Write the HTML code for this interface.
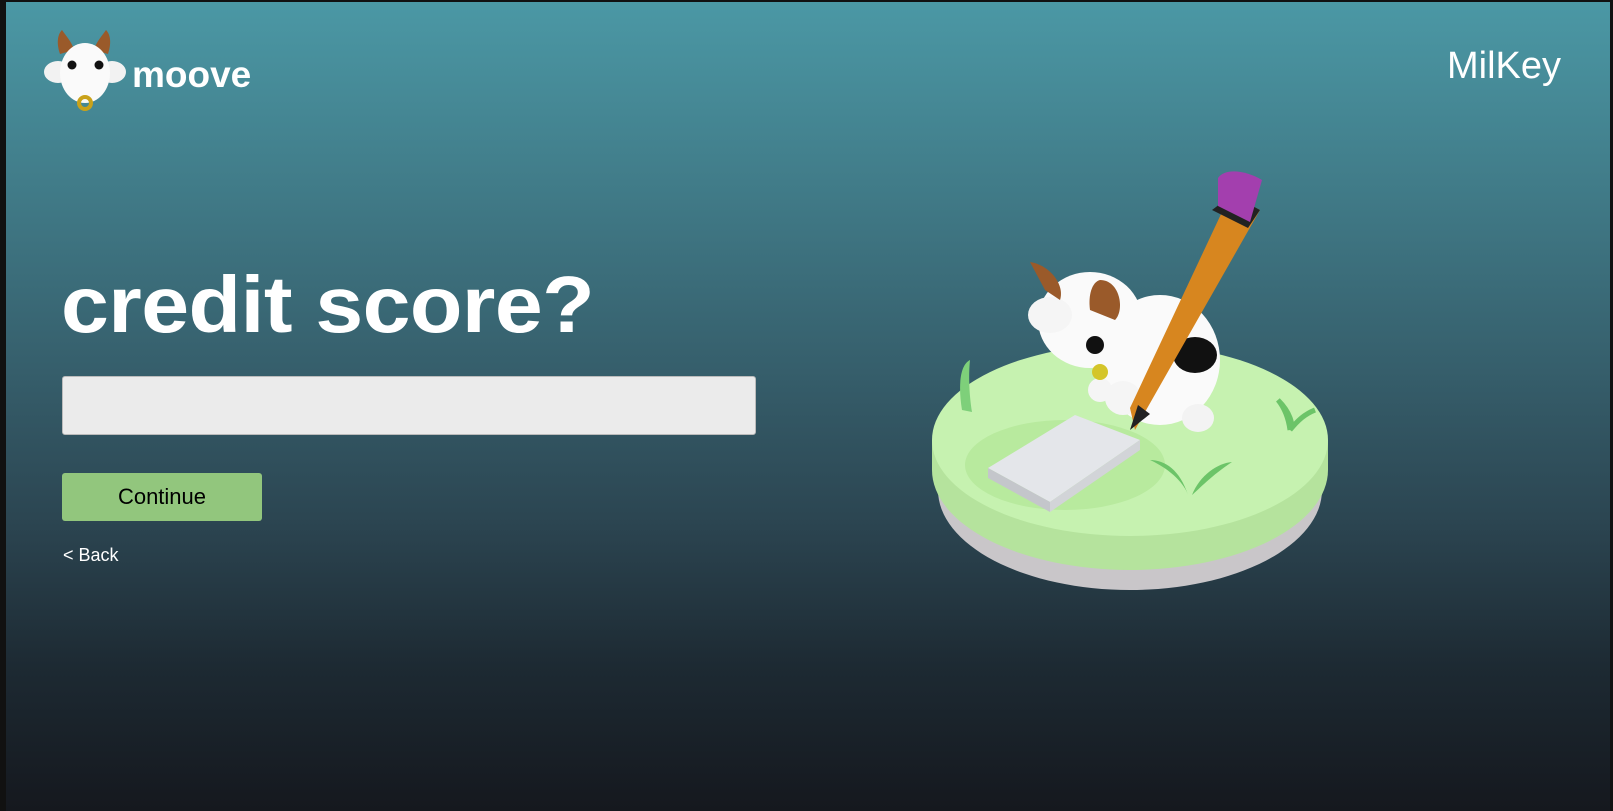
<!DOCTYPE html>
<html><head><style>
html,body{margin:0;padding:0}
body{width:1613px;height:811px;position:relative;overflow:hidden;background:#111;font-family:"Liberation Sans",Arial,sans-serif}
#bg{position:absolute;left:6px;top:2px;width:1604px;height:809px;background:linear-gradient(180deg,#4b98a5 0%,#427f8c 20%,#365f6c 45%,#2b4450 65%,#1d2a33 82%,#15181e 100%)}
.abs{position:absolute}
</style></head><body>
<div id="bg"></div>
<svg class="abs" style="left:42px;top:28px" width="90" height="84" viewBox="0 0 90 84">
 <path d="M18 26 C14 14 16 6 20 2 C24 8 30 14 32 22Z" fill="#9a5a2a"/>
 <path d="M66 26 C70 14 68 6 64 2 C60 8 54 14 52 22Z" fill="#9a5a2a"/>
 <ellipse cx="16" cy="44" rx="14" ry="11" fill="#f2f2f2"/>
 <ellipse cx="70" cy="44" rx="14" ry="11" fill="#f2f2f2"/>
 <ellipse cx="43" cy="45" rx="25" ry="30" fill="#fafafa"/>
 <circle cx="30" cy="37" r="4.5" fill="#111"/><circle cx="57" cy="37" r="4.5" fill="#111"/>
 <circle cx="43" cy="75" r="6" fill="none" stroke="#c9a21a" stroke-width="4"/>
</svg>
<div class="abs" style="left:132px;top:54px;font-size:37px;font-weight:bold;color:#fff">moove</div>
<div class="abs" style="left:1447px;top:45px;font-size:38px;color:#fff">MilKey</div>
<div class="abs" style="left:61px;top:259px;font-size:80px;font-weight:bold;color:#fff;letter-spacing:-0.5px;transform:scaleX(1.075);transform-origin:left">credit score?</div>
<div class="abs" style="left:62px;top:376px;width:694px;height:59px;background:#ebebeb;border:1px solid #bbb;border-radius:3px;box-sizing:border-box"></div>
<div class="abs" style="left:62px;top:473px;width:200px;height:48px;background:#92c67d;border-radius:3px;color:#000;font-size:22px;text-align:center;line-height:48px">Continue</div>
<div class="abs" style="left:63px;top:545px;font-size:18px;color:#fff">&lt; Back</div>
<svg class="abs" style="left:900px;top:150px" width="460" height="460" viewBox="0 0 460 460">
 <ellipse cx="230" cy="340" rx="192" ry="100" fill="#c9c6c9"/>
 <path d="M32 290 L32 320 A198 100 0 0 0 428 320 L428 290Z" fill="#b5e39d"/>
 <ellipse cx="230" cy="290" rx="198" ry="96" fill="#c6f2b0"/>
 <ellipse cx="165" cy="315" rx="100" ry="45" fill="#b8ea9e"/>
 <ellipse cx="260" cy="210" rx="60" ry="65" fill="#fafafa"/>
 <ellipse cx="295" cy="205" rx="22" ry="18" fill="#111"/>
 <ellipse cx="200" cy="240" rx="12" ry="12" fill="#f5f5f5"/>
 <ellipse cx="223" cy="248" rx="18" ry="17" fill="#f5f5f5"/>
 <ellipse cx="298" cy="268" rx="16" ry="14" fill="#f3f3f3"/>
 <ellipse cx="190" cy="170" rx="52" ry="48" fill="#fafafa"/>
 <ellipse cx="150" cy="165" rx="22" ry="18" fill="#f5f5f5"/>
 <path d="M130 112 C150 115 165 135 160 150 L145 140Z" fill="#9a5a2a"/>
 <path d="M200 130 C220 130 225 160 215 170 L190 160 C188 145 192 132 200 130Z" fill="#9a5a2a"/>
 <circle cx="195" cy="195" r="9" fill="#111"/>
 <circle cx="200" cy="222" r="8" fill="#d4c52a"/>
 <path d="M330 45 L360 60 L245 262 L235 280 L230 258Z" fill="#d7861f"/>
 <path d="M312 60 L348 78 L360 60 L332 45Z" fill="#222"/>
 <path d="M318 28 C325 18 345 20 362 30 L350 72 L318 56Z" fill="#a33fae"/>
 <path d="M238 255 L230 280 L250 264Z" fill="#222"/>
 <path d="M88 318 L175 265 L240 290 L150 352Z" fill="#e4e6ea"/>
 <path d="M88 318 L150 352 L150 362 L88 328Z" fill="#c4c6cb"/>
 <path d="M150 352 L240 290 L240 300 L150 362Z" fill="#d2d4d8"/>
 <path d="M62 260 C58 235 60 215 70 210 C68 230 70 250 72 262Z" fill="#7ed07a"/>
 <path d="M288 345 C280 320 265 310 250 310 C272 320 285 335 288 345Z" fill="#6cc468"/>
 <path d="M292 345 C300 325 318 313 332 312 C312 325 298 340 292 345Z" fill="#6cc468"/>
 <path d="M390 280 C388 265 382 255 378 250 C390 262 394 275 390 280 C398 270 405 264 415 260" fill="none" stroke="#6cc468" stroke-width="5"/>
</svg>
</body></html>
